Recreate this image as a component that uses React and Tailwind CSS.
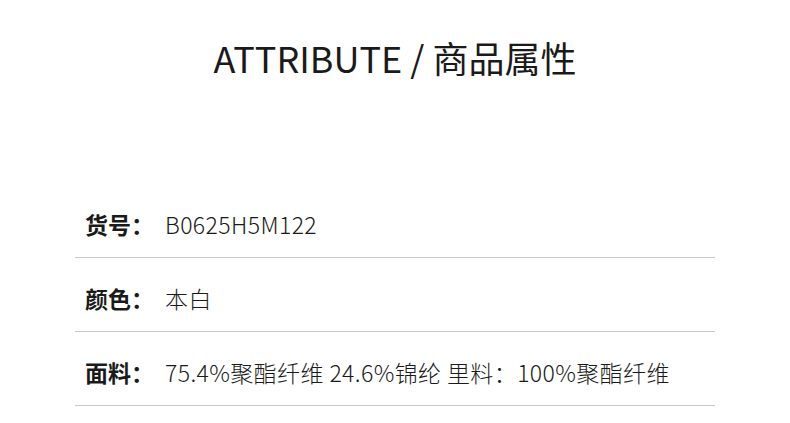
export default function App() {
  const rows = [
    { label: "货号：", value: "B0625H5M122" },
    { label: "颜色：", value: "本白" },
    { label: "面料：", value: "75.4%聚酯纤维 24.6%锦纶 里料：100%聚酯纤维" },
  ];
  return (
    <div
      className="w-[790px] h-[423px] bg-white text-[#1a1a1a] overflow-hidden"
      style={{ fontFamily: '"Noto Sans CJK SC", "Noto Sans", sans-serif' }}
    >
      <div className="pt-[35px] flex justify-center">
        <h1 className="text-[36px] leading-[44px] font-normal">ATTRIBUTE / 商品属性</h1>
      </div>
      <div className="mt-[105px] mx-[75px] w-[640px]">
        {rows.map((r, i) => (
          <div key={i} className="flex items-center h-[74px] border-b border-[#c8c8c8]">
            <div className="w-[90px] pl-[10px] text-[23px] font-bold pt-[8px] whitespace-nowrap">{r.label}</div>
            <div className="text-[23px] font-light tracking-[0.4px] pt-[8px] whitespace-nowrap">{r.value}</div>
          </div>
        ))}
      </div>
    </div>
  );
}
